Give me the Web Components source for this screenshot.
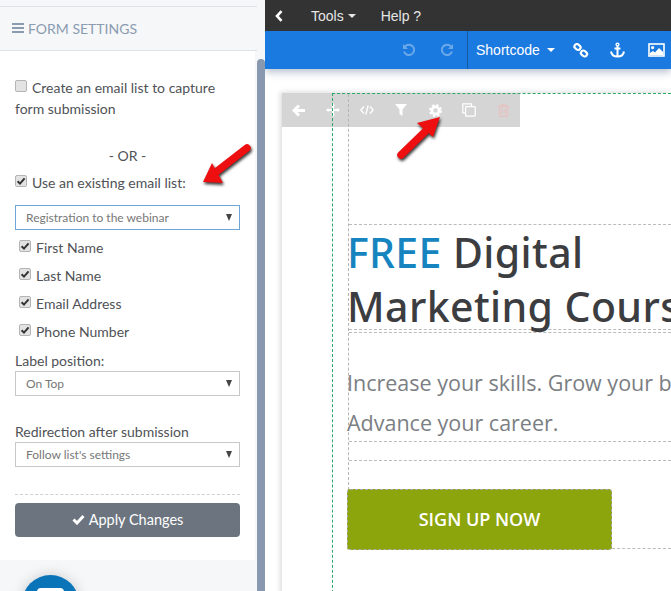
<!DOCTYPE html>
<html>
<head>
<meta charset="utf-8">
<title>Form settings</title>
<style>
    html, body { margin: 0; height: 591px; overflow: hidden; background: #fff; }
</style>
</head>
<body>
<app-shell>
    <form-settings slot="side"></form-settings>
    <editor-pane slot="main"></editor-pane>
</app-shell>
<red-arrow points="247,148 203,182" wings="212,163 223,183" ></red-arrow>
<red-arrow points="401,155 440,117" wings="417,123 433,137"></red-arrow>

<script>
class AppShell extends HTMLElement {
    constructor() {
        super();
        this.attachShadow({ mode: 'open' });
        this.shadowRoot.innerHTML = `
            <style>
                :host { display: grid; grid-template-columns: 257px 8px 406px; height: 591px; overflow: hidden; }
                .track { background: #f5f7f9; padding-top: 59px; box-sizing: border-box; height: 591px; }
                .thumb { background: #8798af; height: 532px; border-radius: 4px 4px 0 0; }
            </style>
            <slot name="side"></slot>
            <div class="track"><div class="thumb"></div></div>
            <slot name="main"></slot>
        `;
    }
}

class CheckRow extends HTMLElement {
    constructor() {
        super();
        this.attachShadow({ mode: 'open' });
        const mark = this.hasAttribute('checked')
            ? '<svg viewBox="0 0 12 12" width="12" height="12"><path d="M2.6 6.2 5 8.6 9.6 3.4" fill="none" stroke="#333" stroke-width="2"/></svg>'
            : '';
        this.shadowRoot.innerHTML = `
            <style>
                :host { display: block; font: 14px/21px Lato, sans-serif; color: #4f5256; }
                .box {
                    display: inline-block; width: 12px; height: 12px; margin-right: 5px; border: 1px solid #b4b4b4;
                    box-sizing: border-box; border-radius: 2px; background: #e3e3e3; vertical-align: 1px; position: relative;
                }
                svg { position: absolute; left: -1px; top: -1px; }
            </style>
            <span class="box">${mark}</span><slot></slot>
        `;
    }
}

class SelectBox extends HTMLElement {
    constructor() {
        super();
        this.attachShadow({ mode: 'open' });
        this.shadowRoot.innerHTML = `
            <style>
                :host {
                    display: flex; align-items: center; justify-content: space-between; box-sizing: border-box;
                    height: 25px; border: 1px solid #c8c8c8; padding: 0 7px 0 10px;
                    font: 12px Lato, sans-serif; color: #777;
                }
                :host([active]) { border-color: #6ea6d8; }
                i { width: 0; height: 0; border: 3.5px solid transparent; border-top: 7px solid #444; border-bottom: 0; }
            </style>
            <slot></slot><i></i>
        `;
    }
}

class FormSettings extends HTMLElement {
    constructor() {
        super();
        this.attachShadow({ mode: 'open' });
        this.shadowRoot.innerHTML = `
            <style>
                :host { display: block; height: 591px; background: #f5f7f9; font: 14px/21px Lato, sans-serif; color: #4f5256; }
                header {
                    margin-top: 6px; height: 42px; border-top: 1px solid #dfe2e5; border-bottom: 1px solid #dfe2e5;
                    display: flex; align-items: center; gap: 4px; padding: 0 0 1px 12px;
                    font-size: 14px; color: #8b9bb0;
                }
                .body { background: #fff; width: 255px; box-sizing: border-box; height: 509px; padding: 26px 15px 0 15px; }
                .or { text-align: center; margin: 26px 0 6px; }
                .fields { margin: 7px 0 0 4px; display: grid; gap: 7px; }
                .lbl { display: block; }
                .lbl1 { margin-top: 8px; }
                .lbl2 { margin-top: 25px; }
                hr { border: 0; border-top: 1px dashed #ccd1d6; margin: 27px 0 8px; }
                .apply {
                    height: 34px; box-sizing: border-box; padding-bottom: 2px; background: #6c757f; border-radius: 4px; color: #fff; font-size: 14.5px;
                    display: flex; align-items: center; justify-content: center; gap: 4px;
                }
                .foot { position: relative; height: 31px; overflow: hidden; }
                .fab {
                    position: absolute; left: 22px; top: 15px; width: 57px; height: 57px; border-radius: 50%;
                    background: #0a74b9; box-shadow: 0 0 14px rgba(0,0,0,.18);
                }
                .fab b { position: absolute; left: 15px; top: 13px; width: 27px; height: 20px; background: #fff; border-radius: 4px; }
            </style>
            <header>
                <svg width="12" height="10" viewBox="0 0 12 10"><path d="M0 1h12M0 5h12M0 9h12" stroke="#8b9bb0" stroke-width="2"/></svg>
                <span>FORM SETTINGS</span>
            </header>
            <div class="body">
                <check-row>Create an email list to capture form submission</check-row>
                <div class="or">- OR -</div>
                <check-row checked>Use an existing email list:</check-row>
                <select-box active style="margin-top:12px">Registration to the webinar</select-box>
                <div class="fields">
                    <check-row checked>First Name</check-row>
                    <check-row checked>Last Name</check-row>
                    <check-row checked>Email Address</check-row>
                    <check-row checked>Phone Number</check-row>
                </div>
                <span class="lbl lbl1">Label position:</span>
                <select-box>On Top</select-box>
                <span class="lbl lbl2">Redirection after submission</span>
                <select-box>Follow list's settings</select-box>
                <hr>
                <div class="apply">
                    <svg width="13" height="11" viewBox="0 0 13 11"><path d="M1.5 5.5 5 9 11.5 2" fill="none" stroke="#fff" stroke-width="3"/></svg>
                    <span>Apply Changes</span>
                </div>
            </div>
            <div class="foot"><div class="fab"><b></b></div></div>
        `;
    }
}

class EditorTop extends HTMLElement {
    constructor() {
        super();
        this.attachShadow({ mode: 'open' });
        this.shadowRoot.innerHTML = `
            <style>
                :host { display: block; font: 14px 'Liberation Sans', Arial, sans-serif; position: relative; z-index: 2; }
                .menu { height: 31px; background: #333; color: #e6e6e6; display: flex; align-items: center; padding-left: 10px; }
                .menu span { display: flex; align-items: center; gap: 4px; }
                .tools { margin-left: 28px; }
                .help { margin-left: 25px; }
                .caret { width: 0; height: 0; border: 4px solid transparent; border-top: 4px solid currentColor; border-bottom: 0; }
                .bar {
                    height: 38px; background: #1b7ae0; color: #fff; display: flex; align-items: center;
                    box-shadow: 0 3px 8px rgba(40,70,110,.35); padding-left: 137px;
                }
                .dim { opacity: .35; }
                .divider { align-self: stretch; width: 1px; background: #15599f; margin-left: 13px; margin-right: 8px; }
                .bar span { display: flex; align-items: center; gap: 7px; }
                .bar svg { display: block; }
            </style>
            <div class="menu">
                <svg width="8" height="12" viewBox="0 0 8 12"><path d="M6.5 1.2 2 6l4.5 4.8" fill="none" stroke="#fff" stroke-width="2.6"/></svg>
                <span class="tools">Tools <i class="caret"></i></span>
                <span class="help">Help ?</span>
            </div>
            <div class="bar">
                <svg class="dim" width="14" height="14" viewBox="0 0 14 14"><path d="M3 3.5A5.2 5.2 0 1 1 2 8.5" fill="none" stroke="#fff" stroke-width="2"/><path d="M1 1v5h5z" fill="#fff"/></svg>
                <svg class="dim" style="margin-left:24px" width="14" height="14" viewBox="0 0 14 14"><path d="M11 3.5A5.2 5.2 0 1 0 12 8.5" fill="none" stroke="#fff" stroke-width="2"/><path d="M13 1v5H8z" fill="#fff"/></svg>
                <i class="divider"></i>
                <span>Shortcode <i class="caret"></i></span>
                <svg style="margin-left:18px" width="16" height="15" viewBox="0 0 16 15"><g fill="none" stroke="#fff" stroke-width="2.2"><rect x="-3.2" y="-2.4" width="6.4" height="4.8" rx="2.2" transform="translate(4.5 4) rotate(40)"/><rect x="-3.2" y="-2.4" width="6.4" height="4.8" rx="2.2" transform="translate(11 10.5) rotate(40)"/></g></svg>
                <svg style="margin-left:21px" width="15" height="16" viewBox="0 0 15 16"><g fill="none" stroke="#fff" stroke-width="2"><circle cx="7.5" cy="2.5" r="1.4" stroke-width="1.4"/><path d="M7.5 4v10.5M4.5 6.5h6M1 9.5c.5 3 3 5 6.5 5s6-2 6.5-5"/></g></svg>
                <svg style="margin-left:23px" width="17" height="14" viewBox="0 0 17 14"><rect x="1" y="1" width="15" height="12" fill="none" stroke="#fff" stroke-width="1.6"/><circle cx="4.6" cy="4.6" r="1.6" fill="#fff"/><path d="M2 12V10l3-2 2 1.4L11 5l4 4v3z" fill="#fff"/></svg>
            </div>
        `;
    }
}

class ElementToolbar extends HTMLElement {
    constructor() {
        super();
        this.attachShadow({ mode: 'open' });
        this.shadowRoot.innerHTML = `
            <style>
                :host { position: absolute; left: 0; top: 0; display: flex; height: 34px; background: #d5d5d5; }
                div { width: 34px; display: flex; align-items: center; justify-content: center; }
                div:first-child { background: #e3e7ec; }
            </style>
            <div><svg width="14" height="13" viewBox="0 0 14 13"><path d="M7 1.5 2 6.5l5 5M2.5 6.5H13" fill="none" stroke="#fff" stroke-width="3"/></svg></div>
            <div><svg width="14" height="14" viewBox="0 0 14 14"><path d="M7 0 9.2 2.6H4.8zM7 14 4.8 11.4h4.4zM0 7l2.6-2.2v4.4zM14 7l-2.6 2.2V4.8z" fill="#fff"/><path d="M7 2v10M2 7h10" stroke="#fff" stroke-width="2"/></svg></div>
            <div><svg width="14" height="10" viewBox="0 0 14 10"><path d="M4 1.5.8 5 4 8.5M10 1.5 13.2 5 10 8.5M8.2.5 5.8 9.5" fill="none" stroke="#fff" stroke-width="1.3"/></svg></div>
            <div><svg width="12" height="12" viewBox="0 0 12 12"><path d="M0 0h12L7.5 5.5V12l-3-2V5.5z" fill="#fff"/></svg></div>
            <div><svg width="13" height="13" viewBox="0 0 13 13"><circle cx="6.5" cy="6.5" r="3.6" fill="none" stroke="#fff" stroke-width="2.6"/><circle cx="6.5" cy="6.5" r="5.4" fill="none" stroke="#fff" stroke-width="2" stroke-dasharray="2.4 1.84"/></svg></div>
            <div><svg width="14" height="14" viewBox="0 0 14 14"><g fill="none" stroke="#fff" stroke-width="1.2"><path d="M9.5 3V.8H.8v9H3"/><rect x="3.6" y="3.6" width="9.6" height="9.6" rx=".6"/></g></svg></div>
            <div><svg width="11" height="13" viewBox="0 0 11 13"><g fill="none" stroke="#e6c2c2" stroke-width="1.3"><path d="M0 2.5h11M3.5 2.5V.8h4v1.7"/><path d="M1.6 2.5v9.8h7.8V2.5M4 5v5M7 5v5"/></g></svg></div>
        `;
    }
}

class EditorCanvas extends HTMLElement {
    constructor() {
        super();
        this.attachShadow({ mode: 'open' });
        this.shadowRoot.innerHTML = `
            <style>
                :host {
                    display: block; margin: 24px 0 0 17px; height: 520px; background: #fff; position: relative;
                    box-shadow: -2px -1px 5px rgba(0,0,0,.14); font-family: 'Open Sans', sans-serif;
                }
                .green { position: relative; margin-left: 50px; height: 100%; border-left: 1px dashed #2aa866; border-top: 1px dashed #2aa866; box-sizing: border-box; }
                .grey { margin-left: 15px; height: 396px; box-sizing: border-box; padding-top: 130px; border-left: 1px dashed #b5b5b5; position: relative; white-space: nowrap; }
                h1 {
                    margin: 0; font: 500 41px/54px 'Noto Sans', 'Open Sans', sans-serif; color: #3c3d41; letter-spacing: .4px;
                    height: 106px; border-top: 1px dashed #bbb;
                    border-bottom: 1px dashed #bbb; box-sizing: border-box;
                }
                h1 div { margin-left: -2px; }
                h1 em { font-style: normal; color: #1684bf; }
                .rule2 { border-top: 1px dashed #bbb; height: 0; margin-top: 2px; }
                p {
                    margin: 30px 0 0 -2px; font: 21.5px/40px 'Open Sans', sans-serif; color: #7b7e83;
                    height: 78px;
                }
                .gap { height: 18px; border-top: 1px dashed #bbb; border-bottom: 1px dashed #bbb; }
                .cta {
                    position: absolute; left: -2px; top: 395px; width: 265px; height: 61px; box-sizing: border-box; padding-bottom: 2px;
                    background: #8ca50c; border: 1px dashed #aaa; border-radius: 3px; color: #fff;
                    display: flex; align-items: center; justify-content: center;
                    font: 600 18px 'Open Sans', sans-serif;
                }
                .tail { position: absolute; left: 263px; right: 0; top: 454px; border-top: 1px dashed #bbb; }
            </style>
            <element-toolbar></element-toolbar>
            <div class="green">
                <div class="grey">
                    <h1><div><em>FREE</em> Digital<br>Marketing Course</div></h1>
                    <div class="rule2"></div>
                    <p>Increase your skills. Grow your business.<br>Advance your career.</p>
                    <div class="gap"></div>
                    <div class="cta">SIGN UP NOW</div>
                    <div class="tail"></div>
                </div>
            </div>
        `;
    }
}

class EditorPane extends HTMLElement {
    constructor() {
        super();
        this.attachShadow({ mode: 'open' });
        this.shadowRoot.innerHTML = `
            <style>
                :host { display: block; width: 406px; height: 591px; overflow: hidden; background: #fff; }
            </style>
            <editor-top></editor-top>
            <editor-canvas></editor-canvas>
        `;
    }
}

// annotation arrows drawn over the screenshot, in page coordinates
class RedArrow extends HTMLElement {
    constructor() {
        super();
        this.attachShadow({ mode: 'open' });
        const [tail, tip] = this.getAttribute('points').split(' ');
        const [w1, w2] = this.getAttribute('wings').split(' ');
        const [tx, ty] = tail.split(',');
        const [px, py] = tip.split(',');
        this.shadowRoot.innerHTML = `
            <style>
                :host { position: absolute; left: 0; top: 0; width: 671px; height: 591px; pointer-events: none; z-index: 5; }
                svg { filter: drop-shadow(1px 2px 1.5px rgba(0,0,0,.8)); }
            </style>
            <svg width="671" height="591">
                <line x1="${tx}" y1="${ty}" x2="${(+tx + +px) / 2 + (px - tx) * .3}" y2="${(+ty + +py) / 2 + (py - ty) * .3}" stroke="#ee0f10" stroke-width="7.5" stroke-linecap="round"/>
                <polygon points="${tip} ${w1} ${w2}" fill="#ee0f10"/>
            </svg>
        `;
    }
}

customElements.define('check-row', CheckRow);
customElements.define('select-box', SelectBox);
customElements.define('form-settings', FormSettings);
customElements.define('editor-top', EditorTop);
customElements.define('element-toolbar', ElementToolbar);
customElements.define('editor-canvas', EditorCanvas);
customElements.define('editor-pane', EditorPane);
customElements.define('red-arrow', RedArrow);
customElements.define('app-shell', AppShell);
</script>
</body>
</html>
